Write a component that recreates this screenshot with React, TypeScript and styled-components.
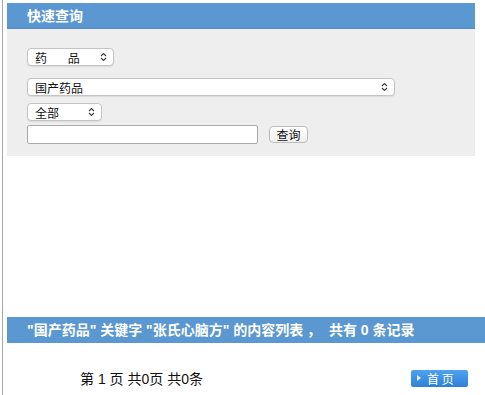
import styled, { createGlobalStyle } from 'styled-components';

const GlobalStyle = createGlobalStyle`
  body {
    margin: 0;
    background: #ffffff;
    font-family: 'Liberation Sans', 'Noto Sans CJK SC', sans-serif;
  }
`;

function Chevrons() {
  return (
    <svg width='7' height='10' viewBox='0 0 7 10'>
      <path d='M1 4 L3.5 1.5 L6 4' fill='none' stroke='#444' strokeWidth='1.2' />
      <path d='M1 6 L3.5 8.5 L6 6' fill='none' stroke='#444' strokeWidth='1.2' />
    </svg>
  );
}

function Select({ width, label }: { width: number; label: string }) {
  return (
    <SelectBox $width={width}>
      <SelectText>{label}</SelectText>
      <Chevrons />
    </SelectBox>
  );
}

export default function App() {
  return (
    <>
      <GlobalStyle />
      <Page>
        <Frame>
          <PanelHeader>快速查询</PanelHeader>
          <SearchPanel>
            <Select width={87} label={'药\u3000\u2002 品'} />
            <Select width={368} label='国产药品' />
            <Select width={75} label='全部' />
            <InputRow>
              <TextInput />
              <QueryButton>查询</QueryButton>
            </InputRow>
          </SearchPanel>
          <Spacer />
          <ResultBar>"国产药品" 关键字 "张氏心脑方" 的内容列表 ，  共有 0 条记录</ResultBar>
          <Pager>
            <PagerText>第 1 页 共0页 共0条</PagerText>
            <FirstButton>
              <Arrow />首 页
            </FirstButton>
          </Pager>
        </Frame>
      </Page>
    </>
  );
}

const Page = styled.div`
  padding-left: 2px;
  height: 395px;
  overflow: hidden;
`;

const Frame = styled.div`
  border-left: 1px solid #a8a8a8;
  padding: 3px 0 0 4px;
  height: 100%;
  display: flex;
  flex-direction: column;
`;

const PanelHeader = styled.div`
  width: 468px;
  height: 26px;
  line-height: 26px;
  padding-left: 20px;
  background: #5b97d0;
  border-bottom: 1px solid #5a8dc0;
  color: #ffffff;
  font-size: 14px;
  font-weight: bold;
  box-sizing: border-box;
`;

const SearchPanel = styled.div`
  width: 468px;
  height: 127px;
  box-sizing: border-box;
  background: #eeeeee;
  padding: 19px 0 0 20px;
  display: flex;
  flex-direction: column;
  align-items: flex-start;
  gap: 12px;

  & > :nth-child(3) {
    margin-top: -5px;
  }
  & > :nth-child(4) {
    margin-top: -8px;
  }
`;

const SelectBox = styled.div<{ $width: number }>`
  width: ${(p) => p.$width}px;
  height: 18px;
  box-sizing: border-box;
  background: #ffffff;
  border: 1px solid #c4c4c4;
  border-radius: 4px;
  box-shadow: 0 1px 1px rgba(0, 0, 0, 0.08);
  display: flex;
  align-items: center;
  justify-content: space-between;
  padding: 0 6px 0 7px;
`;

const SelectText = styled.span`
  font-size: 12px;
  color: #111;
  font-family: 'Noto Sans CJK SC', sans-serif;
  white-space: pre;
`;

const InputRow = styled.div`
  display: flex;
  align-items: center;
  gap: 11px;
`;

const TextInput = styled.input`
  width: 231px;
  height: 19px;
  box-sizing: border-box;
  border: 1px solid #aaaaaa;
  border-radius: 2px;
  background: #ffffff;
  margin: 0;
`;

const QueryButton = styled.button`
  width: 39px;
  height: 17px;
  padding: 0;
  margin: 0;
  border: 1px solid #bdbdbd;
  border-radius: 4px;
  background: linear-gradient(#ffffff, #f0f0f0);
  font-size: 12px;
  font-family: 'Noto Sans CJK SC', sans-serif;
  color: #111;
  line-height: 15px;
`;

const Spacer = styled.div`
  height: 161px;
`;

const ResultBar = styled.div`
  height: 26px;
  line-height: 26px;
  background: #5b97d0;
  color: #ffffff;
  font-size: 14px;
  font-weight: bold;
  padding-left: 20px;
  white-space: pre;
`;

const Pager = styled.div`
  display: flex;
  align-items: center;
  justify-content: space-between;
  margin-top: 25px;
  padding: 0 17px 0 73px;
`;

const PagerText = styled.span`
  font-size: 14px;
  color: #111;
`;

const FirstButton = styled.div`
  width: 57px;
  height: 17px;
  box-sizing: border-box;
  background: linear-gradient(#4ea3ee, #2f80d6);
  border-radius: 2px;
  color: #ffffff;
  font-size: 12px;
  font-family: 'Noto Sans CJK SC', sans-serif;
  display: flex;
  align-items: center;
  padding-left: 6px;
  gap: 6px;
  white-space: pre;
`;

const Arrow = styled.span`
  width: 0;
  height: 0;
  border-top: 3px solid transparent;
  border-bottom: 3px solid transparent;
  border-left: 4px solid #e8f2ff;
`;
